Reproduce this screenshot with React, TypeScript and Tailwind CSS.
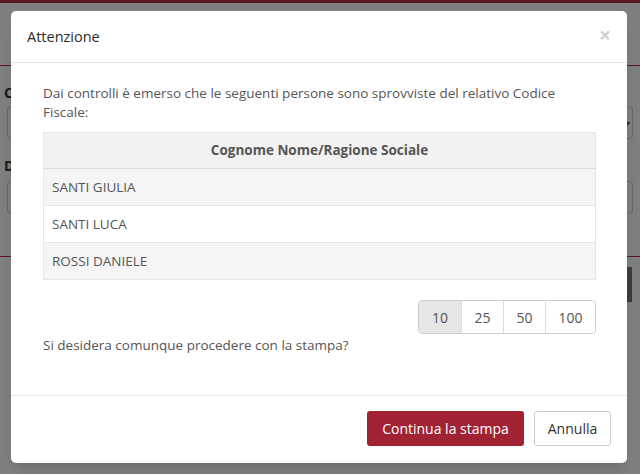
const rows = ["SANTI GIULIA", "SANTI LUCA", "ROSSI DANIELE"];
const pages = ["10", "25", "50", "100"];

function Page() {
  return (
    <div className="flex flex-col h-full bg-white">
      <div className="h-[3px] bg-[#b4343e]" />
      <div className="h-[62px]" />
      <div className="h-px bg-[#b4343e]" />
      <div className="flex flex-col px-[7px] pt-[20px]">
        <span className="text-[14px] font-bold text-[#333] leading-[14px] -ml-[3px]">C</span>
        <div className="mt-[6px] h-[33px] rounded-[4px] border border-[#ccc] flex items-center justify-end pr-[2px]">
          <span className="text-[8px] text-[#555]">▾</span>
        </div>
        <span className="mt-[20px] text-[14px] font-bold text-[#333] leading-[14px] -ml-[3px]">D</span>
        <div className="mt-[8px] h-[33px] rounded-[4px] border border-[#ccc]" />
      </div>
      <div className="h-[42px]" />
      <div className="h-px bg-[#b4343e]" />
      <div className="flex justify-end pr-[8px] pt-[10px]">
        <div className="w-[6px] h-[35px] bg-[#76807a] border border-dotted border-[#c04050]" />
      </div>
    </div>
  );
}

export default function App() {
  return (
    <div
      className="relative w-[640px] h-[474px] overflow-hidden"
      style={{ fontFamily: '"Open Sans", "Liberation Sans", sans-serif' }}
    >
      <Page />
      <div className="absolute inset-0 bg-black/50 pl-[11px] pt-[11px]">
        <div className="w-[616px] h-[452px] bg-white rounded-[5px] shadow-lg flex flex-col">
          <div className="h-[52px] flex items-center justify-between pl-[16px] pr-[16px] border-b border-[#e5e5e5]">
            <h4 className="text-[14.5px] font-medium text-[#2b2b2b]">Attenzione</h4>
            <span className="text-[21px] font-bold leading-none text-black/20 -mt-[2px]">×</span>
          </div>
          <div className="flex flex-col pl-[32px] pr-[31px] pt-[21px] pb-[40px] text-[13.5px] text-[#555] leading-[19px]">
            <p>
              Dai controlli è emerso che le seguenti persone sono sprovviste del relativo Codice Fiscale:
            </p>
            <table className="mt-[10px] w-full border border-[#e6e6e6] border-collapse">
              <thead>
                <tr className="h-[36px] bg-[#f2f2f2]">
                  <th className="font-bold text-center border-b border-[#ddd]">Cognome Nome/Ragione Sociale</th>
                </tr>
              </thead>
              <tbody>
                {rows.map((r, i) => (
                  <tr
                    key={r}
                    className={`h-[37px] ${i % 2 === 0 ? "bg-[#f5f5f5]" : "bg-white"} ${i < rows.length - 1 ? "border-b border-[#e6e6e6]" : ""}`}
                  >
                    <td className="pl-[8px]">{r}</td>
                  </tr>
                ))}
              </tbody>
            </table>
            <div className="mt-[20px] flex justify-end">
              <div className="flex rounded-[4px] border border-[#ccc] overflow-hidden">
                {pages.map((p, i) => (
                  <button
                    key={p}
                    className={`h-[32px] text-[14px] text-[#555] ${p === "100" ? "w-[50px]" : "w-[42px]"} ${i > 0 ? "border-l border-[#ddd]" : ""} ${i === 0 ? "bg-[#e6e6e6]" : "bg-white"}`}
                  >
                    {p}
                  </button>
                ))}
              </div>
            </div>
            <p className="mt-[1px] leading-[20px]">Si desidera comunque procedere con la stampa?</p>
          </div>
          <div className="border-t border-[#e5e5e5] flex justify-end gap-[10px] pt-[15px] pr-[16px]">
            <button className="h-[35px] w-[157px] rounded-[3px] bg-[#a12333] text-white text-[14px]">
              Continua la stampa
            </button>
            <button className="h-[35px] w-[77px] rounded-[3px] border border-[#ccc] bg-white text-[#333] text-[14px]">
              Annulla
            </button>
          </div>
        </div>
      </div>
    </div>
  );
}
